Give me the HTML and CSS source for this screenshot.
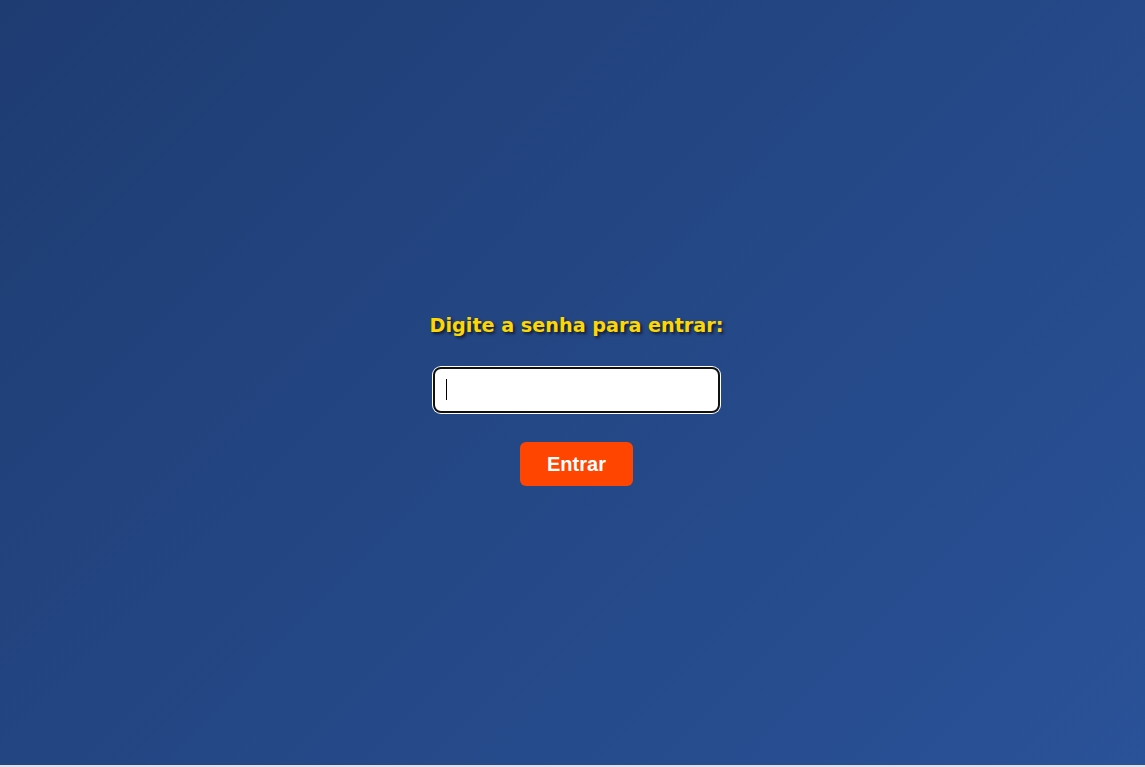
FILE: index.html
```html
<!DOCTYPE html>
<html lang="pt">
<head>
<meta charset="utf-8">
<title>Entrar</title>
<link rel="stylesheet" href="styles.css">
</head>
<body>
<main class="screen">
  <form class="login" onsubmit="return false">
    <label class="prompt" for="senha">Digite a senha para entrar:</label>
    <div class="field">
      <input id="senha" class="password" type="password">
      <span class="caret"></span>
    </div>
    <button class="enter" type="submit">Entrar</button>
  </form>
</main>
</body>
</html>
```
FILE: styles.css
```css
html, body {
  margin: 0;
  padding: 0;
  background: #dfe4ec;
}
.screen {
  height: 765px;
  box-sizing: border-box;
  padding-left: 8px;
  background: linear-gradient(135deg, #1e3c72 0%, #2a5298 100%);
  display: flex;
  align-items: center;
  justify-content: center;
}
.login {
  display: flex;
  flex-direction: column;
  align-items: center;
  margin-top: 35px;
}
.prompt {
  font-family: "DejaVu Sans", Verdana, sans-serif;
  font-weight: bold;
  font-size: 19.2px;
  line-height: 24px;
  color: #ffd700;
  text-shadow: 2px 2px 3px rgba(0, 0, 0, 0.6);
}
.field {
  position: relative;
  margin-top: 29px;
}
.password {
  display: block;
  box-sizing: border-box;
  width: 287px;
  height: 46px;
  border: 2px solid #111;
  border-radius: 8px;
  box-shadow: 0 0 0 1px #fff;
  outline: none;
  background: #fff;
  padding: 0 12px;
  font-size: 16px;
}
.caret {
  position: absolute;
  left: 13px;
  top: 12px;
  width: 1px;
  height: 21px;
  background: #000;
}
.enter {
  margin-top: 29px;
  border: none;
  border-radius: 6px;
  background: #ff4500;
  color: #fff;
  font-family: "Liberation Sans", Arial, sans-serif;
  font-weight: bold;
  font-size: 20px;
  line-height: 24px;
  padding: 10px 27px;
  cursor: pointer;
}
```
